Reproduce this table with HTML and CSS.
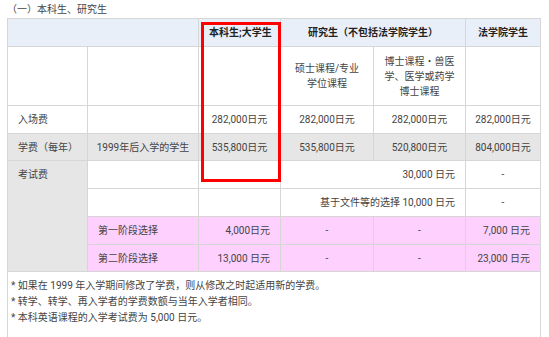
FILE: index.html
```html
<!DOCTYPE html>
<html lang="zh-CN">
<head>
<meta charset="utf-8">
<title>费用</title>
<link rel="stylesheet" href="styles.css">
</head>
<body>
<div class="page">
  <div class="title">（一）本科生、研究生</div>
  <div class="wrap">
    <table class="fees">
      <colgroup>
        <col class="c1"><col class="c2"><col class="c3"><col class="c4"><col class="c5"><col class="c6">
      </colgroup>
      <tr class="head">
        <th colspan="2"></th>
        <th class="left">本科生;大学生</th>
        <th colspan="2">研究生（不包括法学院学生）</th>
        <th>法学院学生</th>
      </tr>
      <tr class="sub">
        <td class="grey"></td>
        <td></td>
        <td></td>
        <td class="center">硕士课程/专业<br>学位课程</td>
        <td class="center">博士课程・兽医<br>学、医学或药学<br>博士课程</td>
        <td></td>
      </tr>
      <tr class="row">
        <td class="label">入场费</td>
        <td></td>
        <td class="center">282,000日元</td>
        <td class="center">282,000日元</td>
        <td class="center">282,000日元</td>
        <td class="center">282,000日元</td>
      </tr>
      <tr class="row short greyrow">
        <td class="label">学费（每年）</td>
        <td class="center">1999年后入学的学生</td>
        <td class="center">535,800日元</td>
        <td class="center">535,800日元</td>
        <td class="center">520,800日元</td>
        <td class="center">804,000日元</td>
      </tr>
      <tr class="row">
        <td class="label grey top" rowspan="4">考试费</td>
        <td></td>
        <td></td>
        <td class="right" colspan="2">30,000 日元</td>
        <td class="center">-</td>
      </tr>
      <tr class="row">
        <td></td>
        <td></td>
        <td class="right" colspan="2">基于文件等的选择 10,000 日元</td>
        <td class="center">-</td>
      </tr>
      <tr class="row pink">
        <td class="label">第一阶段选择</td>
        <td class="right">4,000日元</td>
        <td class="center">-</td>
        <td class="center">-</td>
        <td class="right">7,000 日元</td>
      </tr>
      <tr class="row short pink">
        <td class="label">第二阶段选择</td>
        <td class="right">13,000 日元</td>
        <td class="center">-</td>
        <td class="center">-</td>
        <td class="right">23,000 日元</td>
      </tr>
      <tr class="notes">
        <td colspan="6">
          <p>* 如果在 1999 年入学期间修改了学费，则从修改之时起适用新的学费。</p>
          <p>* 转学、转学、再入学者的学费数额与当年入学者相同。</p>
          <p>* 本科英语课程的入学考试费为 5,000 日元。</p>
        </td>
      </tr>
    </table>
    <div class="highlight"></div>
  </div>
</div>
</body>
</html>
```

FILE: styles.css
```css
html, body {
  margin: 0;
  padding: 0;
  background: #ffffff;
}

body {
  font-family: Roboto, "Noto Sans CJK SC", "Noto Sans", sans-serif;
  font-size: 10px;
  color: #444444;
}

.page {
  padding: 3px 10px 0 7px;
}

.title {
  height: 15px;
  line-height: 14px;
  color: #444444;
}

.wrap {
  position: relative;
  width: 533px;
}

.fees {
  border-collapse: collapse;
  table-layout: fixed;
  width: 533px;
}

.c1 { width: 80px; }
.c2 { width: 111px; }
.c3 { width: 82px; }
.c4 { width: 93px; }
.c5 { width: 92px; }
.c6 { width: 75px; }

.fees th,
.fees td {
  border: 1px solid #d6d6d6;
  padding: 0 2px;
  line-height: 15px;
  vertical-align: middle;
  font-weight: normal;
  white-space: nowrap;
}

.head th {
  background: #e9eff8;
  height: 27px;
  font-weight: bold;
  color: #222222;
  text-align: center;
}

.head th.left {
  text-align: left;
  padding-left: 10px;
}

.sub td {
  height: 58px;
  background: #ffffff;
}

.row td {
  height: 27px;
}

.row.short td {
  height: 26px;
}

.grey {
  background: #e6e6e6;
}

.greyrow td {
  background: #e6e6e6;
}

.pink td {
  background: #fdd0fd;
}

.fees td.label {
  text-align: left;
  padding-left: 10px;
}

.fees td.top {
  vertical-align: top;
  padding-top: 6px;
  background: #e6e6e6;
}

.center { text-align: center; }

.fees td.right {
  text-align: right;
  padding-right: 10px;
}

.notes td {
  height: 58px;
  padding: 6px 3px 5px 3px;
  vertical-align: top;
  background: #ffffff;
}

.notes p {
  margin: 0;
  line-height: 16px;
}

.highlight {
  position: absolute;
  left: 194px;
  top: 4px;
  width: 74px;
  height: 154px;
  border: 3px solid #ff0000;
}
```
